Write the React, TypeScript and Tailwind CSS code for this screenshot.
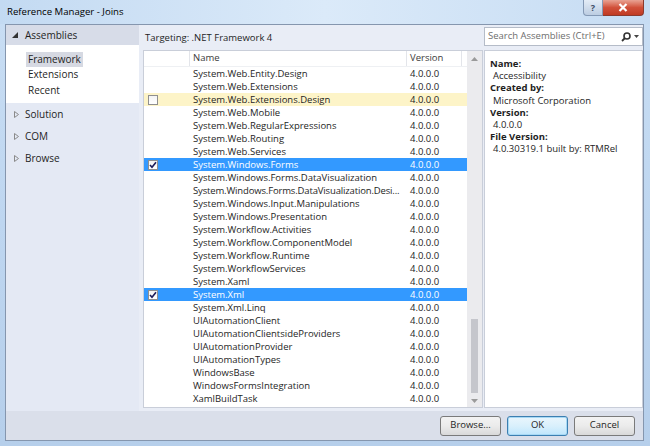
import React from "react";

type Row = { name: string; version: string; checked?: boolean; selected?: boolean; hover?: boolean; tight?: boolean };

const rows: Row[] = [
  { name: "System.Web.Entity.Design", version: "4.0.0.0" },
  { name: "System.Web.Extensions", version: "4.0.0.0" },
  { name: "System.Web.Extensions.Design", version: "4.0.0.0", hover: true },
  { name: "System.Web.Mobile", version: "4.0.0.0" },
  { name: "System.Web.RegularExpressions", version: "4.0.0.0" },
  { name: "System.Web.Routing", version: "4.0.0.0" },
  { name: "System.Web.Services", version: "4.0.0.0" },
  { name: "System.Windows.Forms", version: "4.0.0.0", checked: true, selected: true },
  { name: "System.Windows.Forms.DataVisualization", version: "4.0.0.0" },
  { name: "System.Windows.Forms.DataVisualization.Desi...", version: "4.0.0.0", tight: true },
  { name: "System.Windows.Input.Manipulations", version: "4.0.0.0" },
  { name: "System.Windows.Presentation", version: "4.0.0.0" },
  { name: "System.Workflow.Activities", version: "4.0.0.0" },
  { name: "System.Workflow.ComponentModel", version: "4.0.0.0" },
  { name: "System.Workflow.Runtime", version: "4.0.0.0" },
  { name: "System.WorkflowServices", version: "4.0.0.0" },
  { name: "System.Xaml", version: "4.0.0.0" },
  { name: "System.Xml", version: "4.0.0.0", checked: true, selected: true },
  { name: "System.Xml.Linq", version: "4.0.0.0" },
  { name: "UIAutomationClient", version: "4.0.0.0" },
  { name: "UIAutomationClientsideProviders", version: "4.0.0.0" },
  { name: "UIAutomationProvider", version: "4.0.0.0" },
  { name: "UIAutomationTypes", version: "4.0.0.0" },
  { name: "WindowsBase", version: "4.0.0.0" },
  { name: "WindowsFormsIntegration", version: "4.0.0.0" },
  { name: "XamlBuildTask", version: "4.0.0.0" },
];

const font = { fontFamily: '"Open Sans", "Noto Sans", sans-serif' };

function CheckBox({ checked }: { checked?: boolean }) {
  return (
    <div className="w-[10px] h-[10px] border border-[#8f8f8f] bg-gradient-to-b from-[#f4f4f4] to-[#ffffff] flex items-center justify-center">
      {checked && (
        <svg width="8" height="8" viewBox="0 0 8 8">
          <path d="M1 4 L3 6.3 L7 1.2" stroke="#1c1c5a" strokeWidth="1.6" fill="none" />
        </svg>
      )}
    </div>
  );
}

function Collapsed({ label }: { label: string }) {
  return (
    <div className="h-[22px] flex items-center pl-[8px] gap-[6px]">
      <svg width="5" height="7" viewBox="0 0 5 7">
        <path d="M0.5 0.5 L4.5 3.5 L0.5 6.5 Z" fill="none" stroke="#8a8a8a" strokeWidth="1" />
      </svg>
      <span className="text-[10px] text-[#1e1e1e]">{label}</span>
    </div>
  );
}

export default function App() {
  return (
    <div
      className="w-[650px] h-[446px] flex flex-col bg-gradient-to-b from-[#c9def4] via-[#bed6f0] to-[#b6cfeb] overflow-hidden"
      style={font}
    >
      {/* title bar */}
      <div className="h-[24px] flex items-start shrink-0 bg-gradient-to-r from-[#c3daf2] via-[#dbeaf9] to-[#c6dcf3]">
        <div className="pl-[7px] pt-[5px] text-[9.6px] text-black">Reference Manager - Joins</div>
        <div className="ml-auto mr-[6px] flex">
          <div className="w-[20px] h-[16px] border border-[#8499b5] border-t-0 rounded-bl-[4px] bg-gradient-to-b from-[#e3ecf6] to-[#bccde2] flex items-center justify-center text-[9px] text-[#3c4c64] font-bold">
            ?
          </div>
          <div className="w-[41px] h-[16px] border border-[#8b3a2e] border-t-0 border-l-0 rounded-br-[4px] bg-gradient-to-b from-[#e8a293] via-[#d1503a] to-[#c03a22] flex items-center justify-center">
            <svg width="10" height="9" viewBox="0 0 10 9">
              <path d="M1.5 1 L8.5 8 M8.5 1 L1.5 8" stroke="#ffffff" strokeWidth="2.2" />
            </svg>
          </div>
        </div>
      </div>

      {/* dialog body */}
      <div className="ml-[5px] mr-[6px] h-[417px] border border-[#8596ae] bg-[#e9edf6] flex flex-col">
        <div className="flex h-[386px]">
          {/* left nav */}
          <div className="w-[133px] bg-[#e4e9f4] flex flex-col">
            <div className="h-[20px] bg-[#d7dce8] flex items-center pl-[6px] gap-[7px]">
              <svg width="6" height="6" viewBox="0 0 6 6">
                <path d="M6 0 L6 6 L0 6 Z" fill="#333" />
              </svg>
              <span className="text-[10px] text-[#1e1e1e]">Assemblies</span>
            </div>
            <div className="h-[58px] bg-white pt-[6px] pl-[20px] flex flex-col text-[10px] text-[#1e1e1e]">
              <div className="h-[16px] flex items-center">
                <span className="bg-[#d6d9e2] px-[2px] leading-[15px]">Framework</span>
              </div>
              <div className="h-[15.5px] flex items-center pl-[2px]">Extensions</div>
              <div className="h-[15.5px] flex items-center pl-[2px]">Recent</div>
            </div>
            <Collapsed label="Solution" />
            <Collapsed label="COM" />
            <Collapsed label="Browse" />
          </div>

          {/* middle: list */}
          <div className="flex-1 flex flex-col pl-[4px] pr-[1px]">
            <div className="h-[25px] flex items-center pl-[2px] pt-[1px] text-[9.5px] text-[#1e1e1e]">
              Targeting: .NET Framework 4
            </div>
            <div className="h-[358px] bg-white border border-[#c9ced9] flex text-[9.5px] text-[#1e1e1e]">
              <div className="flex-1 flex flex-col">
                <div className="h-[16px] flex border-b border-[#eef0f3]">
                  <div className="w-[46px] border-r border-[#e3e5ea]" />
                  <div className="w-[217px] border-r border-[#e3e5ea] pl-[3px] flex items-center text-[#3b3b3b]">Name</div>
                  <div className="w-[55px] border-r border-[#e3e5ea] pl-[3px] flex items-center text-[#3b3b3b]">Version</div>
                </div>
                {rows.map((r) => (
                  <div
                    key={r.name}
                    className={
                      "h-[13px] flex items-center " +
                      (r.selected ? "bg-[#3399ff] text-white" : r.hover ? "bg-[#fdf4c8]" : "")
                    }
                  >
                    <div className="w-[46px] pl-[4px] flex items-center">
                      {(r.checked || r.hover) && <CheckBox checked={r.checked} />}
                    </div>
                    <div
                      className={
                        "w-[217px] pl-[3px] whitespace-nowrap leading-[13px] " +
                        (r.tight ? "tracking-[-0.15px]" : "")
                      }
                    >
                      {r.name}
                    </div>
                    <div className="pl-[3px] leading-[13px]">{r.version}</div>
                  </div>
                ))}
              </div>
              {/* scrollbar */}
              <div className="w-[15px] bg-[#ebebee] flex flex-col items-center">
                <div className="h-[14px] flex items-center justify-center pt-[2px]">
                  <svg width="7" height="4" viewBox="0 0 7 4">
                    <path d="M0 4 L3.5 0 L7 4 Z" fill="#9a9a9a" />
                  </svg>
                </div>
                <div className="flex-1 w-full flex flex-col items-center">
                  <div className="h-[254px]" />
                  <div className="w-[7px] h-[74px] bg-[#c5c6cc]" />
                </div>
                <div className="h-[12px] flex items-center justify-center">
                  <svg width="7" height="4" viewBox="0 0 7 4">
                    <path d="M0 0 L3.5 4 L7 0 Z" fill="#9a9a9a" />
                  </svg>
                </div>
              </div>
            </div>
          </div>

          {/* right: search + details */}
          <div className="w-[159px] flex flex-col">
            <div className="h-[25px] pt-[2px]">
              <div className="h-[19px] bg-white border border-[#b5bcc8] flex items-center pl-[3px] pr-[3px]">
                <span className="text-[9.5px] text-[#6d6d6d] whitespace-nowrap">Search Assemblies (Ctrl+E)</span>
                <div className="ml-auto flex items-center gap-[3px]">
                  <svg width="10" height="10" viewBox="0 0 10 10">
                    <circle cx="6" cy="4" r="3" fill="none" stroke="#333" strokeWidth="1.6" />
                    <path d="M4 6 L1 9" stroke="#333" strokeWidth="1.8" />
                  </svg>
                  <svg width="5" height="3" viewBox="0 0 5 3">
                    <path d="M0 0 L5 0 L2.5 3 Z" fill="#444" />
                  </svg>
                </div>
              </div>
            </div>
            <div className="h-[358px] bg-white border border-[#c9ced9] pl-[5px] pt-[7px] text-[9.5px] text-[#1e1e1e] leading-[12.2px]">
              <div className="font-bold">Name:</div>
              <div className="pl-[3px]">Accessibility</div>
              <div className="font-bold">Created by:</div>
              <div className="pl-[3px]">Microsoft Corporation</div>
              <div className="font-bold">Version:</div>
              <div className="pl-[3px]">4.0.0.0</div>
              <div className="font-bold">File Version:</div>
              <div className="pl-[3px]">4.0.30319.1 built by: RTMRel</div>
            </div>
          </div>
        </div>

        {/* footer */}
        <div className="flex-1 bg-[#dadfea] flex items-center justify-end pr-[8px] gap-[6px] text-[9.5px] text-[#1e1e1e]">
          <button className="w-[61px] h-[20px] rounded-[3px] border border-[#7a7a7a] bg-gradient-to-b from-[#f3f3f3] via-[#ebebeb] to-[#d9d9d9]">
            Browse...
          </button>
          <button className="w-[61px] h-[20px] rounded-[3px] border border-[#3c7fb1] bg-gradient-to-b from-[#eaf6fd] via-[#d9f0fc] to-[#bee6fd] shadow-[inset_0_0_0_1px_#a7d9f5]">
            OK
          </button>
          <button className="w-[61px] h-[20px] rounded-[3px] border border-[#7a7a7a] bg-gradient-to-b from-[#f3f3f3] via-[#ebebeb] to-[#d9d9d9]">
            Cancel
          </button>
        </div>
      </div>
    </div>
  );
}
